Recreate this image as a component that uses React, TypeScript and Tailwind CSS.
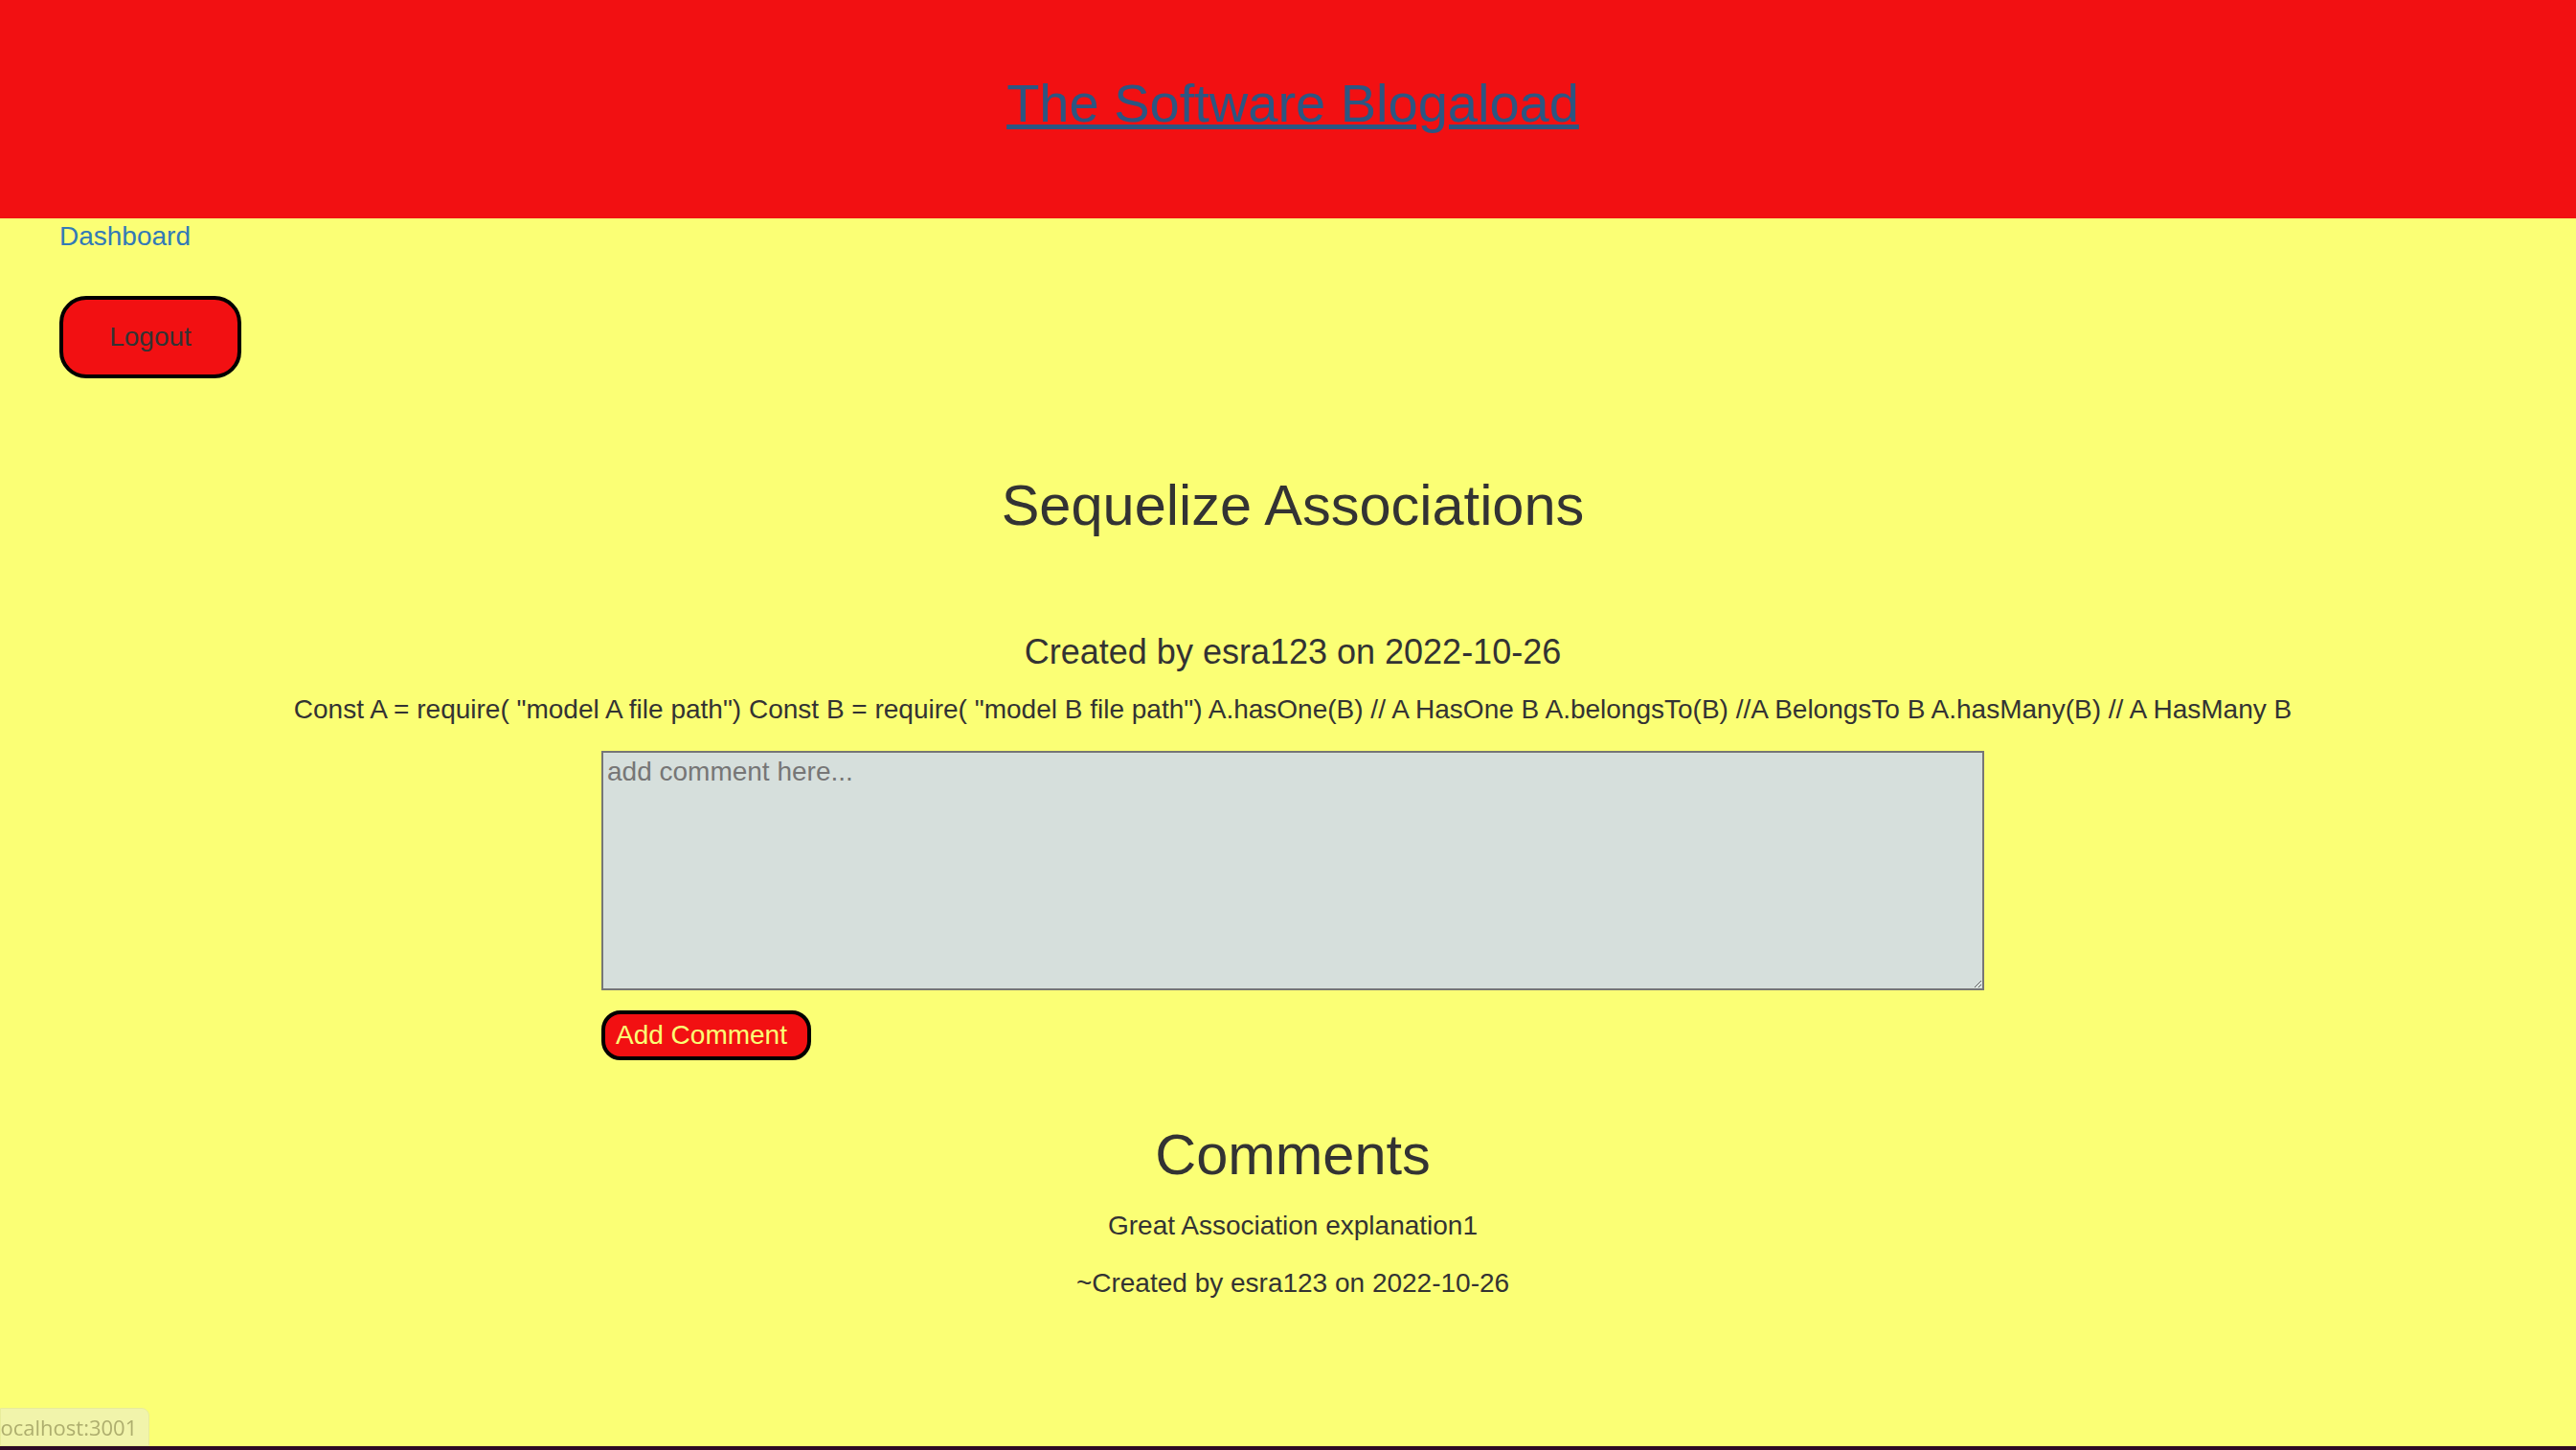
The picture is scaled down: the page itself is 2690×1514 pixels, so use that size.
export default function App() {
  return (
    <div className="min-h-screen bg-[#fbff75] font-['Liberation_Sans',Arial,sans-serif] text-[#333333]">
      {/* Header */}
      <header className="h-[228px] bg-[#f21012] pl-[10px] pt-[77px] text-center">
        <a href="#" className="text-[56px] leading-[62px] text-[#2c5682] underline">
          The Software Blogaload
        </a>
      </header>

      {/* Nav */}
      <nav className="px-[62px]">
        <a href="#" className="block text-[28px] leading-[38px] text-[#337ab7]">
          Dashboard
        </a>
        <button className="mt-[43px] h-[86px] w-[190px] rounded-[28px] border-[4px] border-black bg-[#f21012] text-[28px] text-[#333333]">
          Logout
        </button>
      </nav>

      {/* Post */}
      <main className="flex flex-col items-center pb-[150px] pl-[10px]">
        <h2 className="mt-[100px] text-[59.5px] leading-[65px]">Sequelize Associations</h2>
        <p className="mt-[101px] text-[36px] leading-[40px]">Created by esra123 on 2022-10-26</p>
        <p className="mt-[20px] text-[28px] leading-[40px]">
          Const A = require( "model A file path") Const B = require( "model B file path") A.hasOne(B) // A HasOne B
          A.belongsTo(B) //A BelongsTo B A.hasMany(B) // A HasMany B
        </p>

        <form className="mt-[23px] flex w-[1444px] flex-col items-start">
          <textarea
            placeholder="add comment here..."
            className="h-[250px] w-[1444px] border-2 border-[#767676] bg-[#d6dfdc] p-[4px] text-[28px] leading-[32px] text-[#333333] placeholder:text-[#767676]"
          />
          <button
            type="button"
            className="mt-[21px] h-[52px] w-[219px] rounded-[20px] border-[4px] border-black bg-[#f21012] pl-[11px] pr-[20px] text-left text-[28px] leading-[32px] text-[#fbff75]"
          >
            Add Comment
          </button>
        </form>

        <h2 className="mt-[66px] text-[59.5px] leading-[65px]">Comments</h2>
        <p className="mt-[22px] text-[28px] leading-[40px]">Great Association explanation1</p>
        <p className="mt-[20px] text-[28px] leading-[40px]">~Created by esra123 on 2022-10-26</p>
      </main>

      {/* browser status bubble */}
      <div className="fixed bottom-[4px] left-0 h-[40px] w-[156px] overflow-hidden rounded-tr-[8px] border border-[#e8ec9a] bg-[#f1f4ab]">
        <span className="ml-[-6px] block text-[22px] leading-[38px] text-[#aeae6e] font-['Open_Sans',sans-serif]">
          localhost:3001
        </span>
      </div>
      <div className="fixed bottom-0 left-0 h-[4px] w-full bg-[#2d0a25]" />
    </div>
  );
}
